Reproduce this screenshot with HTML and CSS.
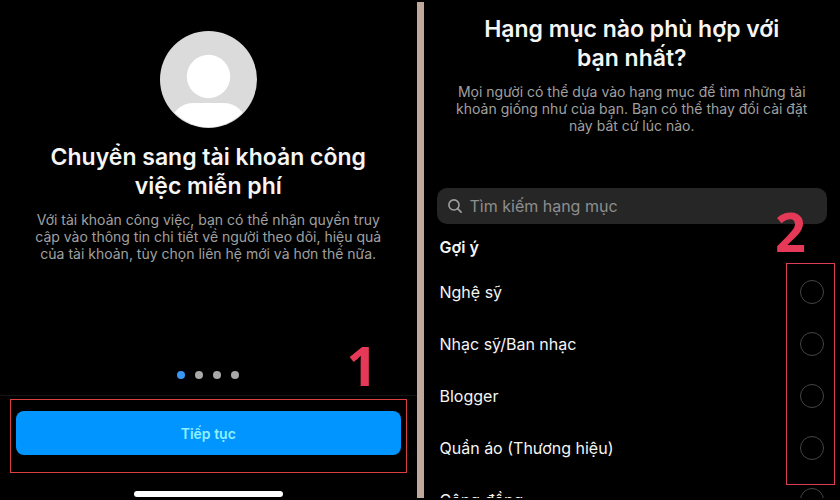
FILE: index.html
```html
<!DOCTYPE html>
<html lang="vi">
<head>
    <meta charset="UTF-8">
    <title>Chuyển sang tài khoản công việc</title>
    <link rel="stylesheet" href="styles.css">
</head>
<body>
<div class="steps">
    <section class="screen intro">
        <div class="intro-content">
            <svg class="avatar" viewBox="0 0 97 97" aria-hidden="true">
                <defs>
                    <clipPath id="avatarClip"><circle cx="48.5" cy="48.5" r="47.5"/></clipPath>
                </defs>
                <circle cx="48.5" cy="48.5" r="48.5" fill="#dbdbdb"/>
                <circle cx="48.5" cy="45.5" r="21.7" fill="#fff"/>
                <path d="M10 92 C13 80 21 72 34 72 H63 C76 72 84 80 87 92 V97 H10 Z" fill="#fff" clip-path="url(#avatarClip)"/>
            </svg>
            <h1 class="title">Chuyển sang tài khoản công<br>việc miễn phí</h1>
            <p class="description">Với tài khoản công việc, bạn có thể nhận quyền truy<br>cập vào thông tin chi tiết về người theo dõi, hiệu quả<br>của tài khoản, tùy chọn liên hệ mới và hơn thế nữa.</p>
        </div>
        <div class="dots">
            <span class="dot active"></span>
            <span class="dot"></span>
            <span class="dot"></span>
            <span class="dot"></span>
        </div>
        <div class="footer">
            <div class="button-frame">
                <button type="button" class="continue-btn">Tiếp tục</button>
            </div>
            <div class="home-bar"></div>
        </div>
        <span class="step-number step-one">1</span>
    </section>

    <section class="screen category">
        <h1 class="title">Hạng mục nào phù hợp với<br>bạn nhất?</h1>
        <p class="description">Mọi người có thể dựa vào hạng mục để tìm những tài<br>khoản giống như của bạn. Bạn có thể thay đổi cài đặt<br>này bất cứ lúc nào.</p>
        <div class="search">
            <svg class="search-icon" viewBox="0 0 16 16" aria-hidden="true">
                <circle cx="6.8" cy="6.8" r="5.8"/>
                <path d="M11 11 L15 15"/>
            </svg>
            <input type="text" class="search-input" placeholder="Tìm kiếm hạng mục" aria-label="Tìm kiếm hạng mục">
        </div>
        <h2 class="list-title">Gợi ý</h2>
        <div class="list">
            <label class="row">Nghệ sỹ<input type="radio" name="category"></label>
            <label class="row">Nhạc sỹ/Ban nhạc<input type="radio" name="category"></label>
            <label class="row">Blogger<input type="radio" name="category"></label>
            <label class="row">Quần áo (Thương hiệu)<input type="radio" name="category"></label>
            <div class="radio-frame"></div>
        </div>
        <label class="row">Cộng đồng<input type="radio" name="category"></label>
        <span class="step-number step-two">2</span>
    </section>
</div>
</body>
</html>
```
FILE: styles.css
```css
* {
    box-sizing: border-box;
}

body {
    margin: 0;
    background-color: #000;
    color: #f5f5f5;
    font-family: Inter, "Liberation Sans", sans-serif;
}

.steps {
    display: grid;
    grid-template-columns: 1fr 1fr;
    gap: 7px;
    height: 100vh;
    padding: 2px 0;
    overflow: hidden;
    /* the gap shows through as the divider */
    background-color: #c0a89c;
    background-clip: content-box;
}

.screen {
    position: relative;
    display: flex;
    flex-direction: column;
    min-height: 0;
    overflow: hidden;
    background-color: #000;
}

.title {
    margin: 0;
    font-size: 23px;
    line-height: 29px;
    font-weight: 600;
    text-align: center;
    white-space: nowrap;
}

.description {
    margin: 10px 0 0;
    font-size: 14px;
    line-height: 17px;
    color: #a0a0a0;
    text-align: center;
    white-space: nowrap;
}

.intro-content {
    display: flex;
    flex-direction: column;
    align-items: center;
    padding-top: 29px;
}

.avatar {
    width: 97px;
    height: 97px;
    margin-bottom: 15px;
}

.dots {
    display: flex;
    justify-content: center;
    gap: 10px;
    margin-top: auto;
    padding-bottom: 16px;
}

.dot {
    width: 8px;
    height: 8px;
    border-radius: 50%;
    background-color: #a8a8a8;
}

.dot.active {
    background-color: #3897f0;
}

.footer {
    border-top: 1px solid #141414;
    padding: 3px 10px 1px;
}

.button-frame {
    height: 74px;
    padding: 11px 5px;
    border: 1px solid #d9413f;
}

.continue-btn {
    display: block;
    width: 100%;
    height: 44px;
    border: none;
    border-radius: 8px;
    background-color: #0095ff;
    color: #8ff0ff;
    font-family: inherit;
    font-size: 14px;
    font-weight: 600;
    cursor: pointer;
}

.home-bar {
    width: 149px;
    height: 6px;
    margin: 18px auto 0;
    border-radius: 3px;
    background-color: #fff;
}

.category {
    padding: 13px 13px 0;
}

.search {
    display: flex;
    flex: none;
    align-items: center;
    gap: 8px;
    height: 36px;
    margin-top: 54px;
    padding: 0 11px;
    border-radius: 10px;
    background-color: #262626;
}

.search-icon {
    flex: none;
    width: 14px;
    height: 14px;
    fill: none;
    stroke: #a0a0a0;
    stroke-width: 1.8;
    stroke-linecap: round;
}

.search-input {
    flex: 1;
    min-width: 0;
    padding: 0;
    border: none;
    outline: none;
    background: none;
    color: #f5f5f5;
    font-family: inherit;
    font-size: 16px;
}

.search-input::placeholder {
    color: #8e8e8e;
}

.list-title {
    margin: 13px 3px 9px;
    font-size: 16px;
    line-height: 20px;
    font-weight: 600;
}

.list {
    position: relative;
}

.row {
    display: flex;
    flex: none;
    align-items: center;
    justify-content: space-between;
    height: 52px;
    padding: 0 3px;
    font-size: 16px;
    cursor: pointer;
}

.row input {
    appearance: none;
    width: 24px;
    height: 24px;
    margin: 0;
    border: 1px solid #444;
    border-radius: 50%;
}

.row input:checked {
    border: 7px solid #0095ff;
}

/* red highlight around the radio column */
.radio-frame {
    position: absolute;
    top: -3px;
    right: -8px;
    bottom: -11px;
    width: 49px;
    border: 1px solid #d93f50;
    pointer-events: none;
}

.step-number {
    position: absolute;
    color: #e63957;
    font-family: "Open Sans", sans-serif;
    font-size: 54px;
    line-height: 54px;
    font-weight: 700;
}

.step-one {
    right: 39px;
    bottom: 106px;
}

.step-two {
    top: 202px;
    right: 34px;
}
```
